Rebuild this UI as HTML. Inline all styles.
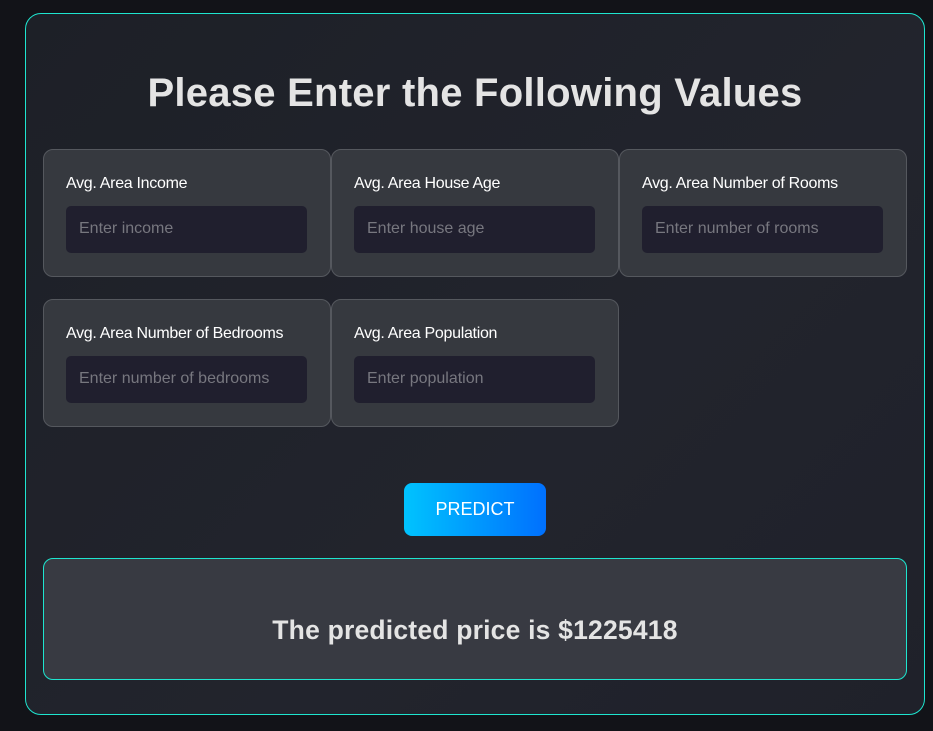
<!DOCTYPE html>
<html><head><style>
body{margin:0;width:933px;height:731px;background:#121318;font-family:"Liberation Sans",sans-serif;overflow:hidden;position:relative}
.c{position:absolute;left:25px;top:13px;width:898px;height:700px;border:1px solid #1ee5cf;border-radius:16px;background:linear-gradient(135deg,#1d2027,#22242d 60%,#1f212a)}
h1{position:absolute;left:0;right:0;top:57px;margin:0;text-align:center;color:#e4e4e4;font-size:40px;font-weight:bold;letter-spacing:0.25px}
.card{position:absolute;width:288px;height:128px;border:1px solid #55585e;border-radius:10px;background:#36393f;box-sizing:border-box}
.card label{position:absolute;left:22px;top:25px;color:#fff;font-size:16px;letter-spacing:-0.3px}
.card .in{position:absolute;left:22px;top:56px;width:241px;height:47px;background:#201f2e;border-radius:5px;color:#77777f;font-size:16px;line-height:46px;padding-left:13px;box-sizing:border-box}
.btn{position:absolute;left:378px;top:469px;width:142px;height:53px;border-radius:8px;background:linear-gradient(90deg,#00c3fe,#0070fe);color:#fff;font-size:18px;text-align:center;line-height:52px}
.res{position:absolute;left:17px;top:544px;width:864px;height:122px;box-sizing:border-box;border:1px solid #1ee5cf;border-radius:10px;background:#383a42;color:#e4e4e4;font-weight:bold;font-size:26.5px;letter-spacing:0.2px;text-align:center;line-height:142px}
</style></head><body>
<div class="c">
<h1>Please Enter the Following Values</h1>
<div class="card" style="left:17px;top:135px"><label>Avg. Area Income</label><div class="in">Enter income</div></div>
<div class="card" style="left:305px;top:135px"><label>Avg. Area House Age</label><div class="in">Enter house age</div></div>
<div class="card" style="left:593px;top:135px"><label>Avg. Area Number of Rooms</label><div class="in">Enter number of rooms</div></div>
<div class="card" style="left:17px;top:285px"><label>Avg. Area Number of Bedrooms</label><div class="in">Enter number of bedrooms</div></div>
<div class="card" style="left:305px;top:285px"><label>Avg. Area Population</label><div class="in">Enter population</div></div>
<div class="btn">PREDICT</div>
<div class="res">The predicted price is $1225418</div>
</div>
</body></html>
